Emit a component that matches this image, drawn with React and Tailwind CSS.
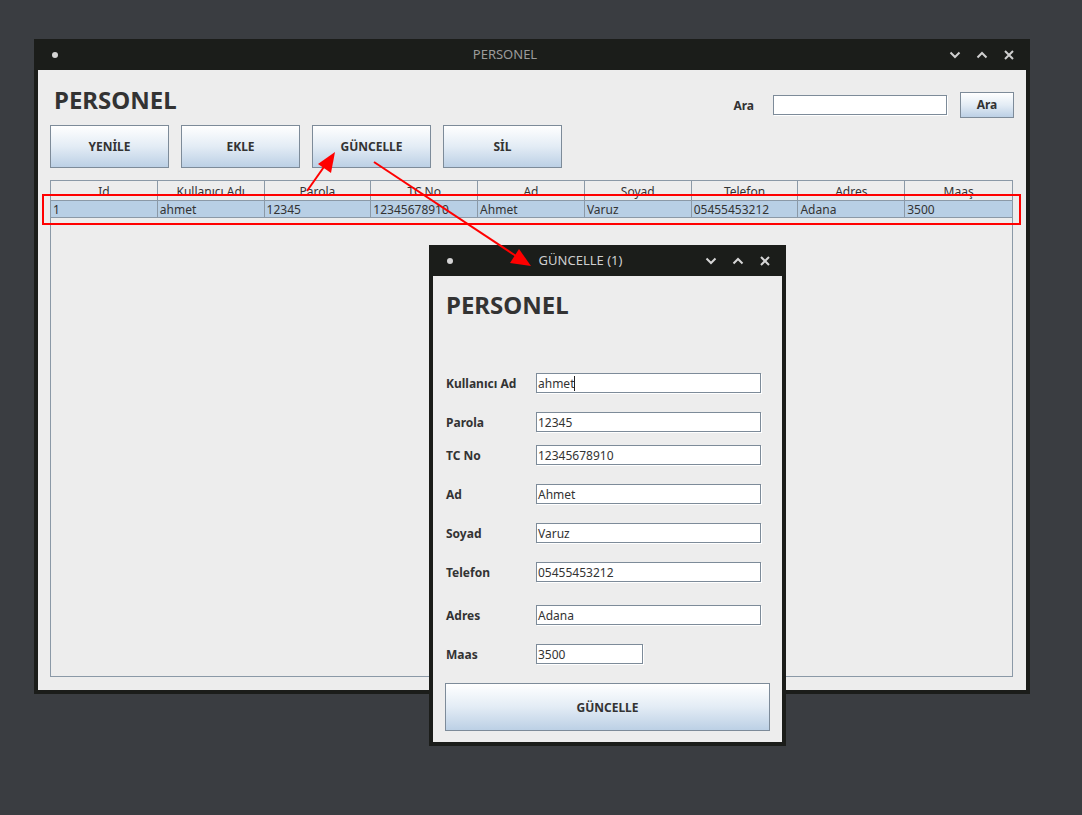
import React from "react";

function Controls({ active }) {
  const c = active ? "#d6d6d6" : "#cfcfcf";
  return (
    <div className="flex items-center w-[84px] h-full">
      <div className="w-[18px] flex justify-center">
        <svg width="12" height="8" viewBox="0 0 12 8"><polyline points="1.5,1.5 6,6 10.5,1.5" fill="none" stroke={c} strokeWidth="2" /></svg>
      </div>
      <div className="w-[18px] ml-[9px] flex justify-center">
        <svg width="12" height="8" viewBox="0 0 12 8"><polyline points="1.5,6.5 6,2 10.5,6.5" fill="none" stroke={c} strokeWidth="2" /></svg>
      </div>
      <div className="w-[18px] ml-[9px] flex justify-center">
        <svg width="10" height="10" viewBox="0 0 10 10"><path d="M1 1 L9 9 M9 1 L1 9" fill="none" stroke={c} strokeWidth="2" /></svg>
      </div>
    </div>
  );
}

function TitleBar({ title, active }) {
  return (
    <div className="flex items-center h-[31px] shrink-0">
      <div className="w-[30px] pl-[18px] flex items-center">
        <div className="w-[6px] h-[6px] rounded-full bg-[#d4d4d4]" />
      </div>
      <div className={"flex-1 text-center text-[13px] leading-[31px] " + (active ? "text-[#cfcfcf]" : "text-[#9b9b9b]")}>{title}</div>
      <Controls active={active} />
    </div>
  );
}

function Btn({ children, cls }) {
  return (
    <div className={"flex items-center justify-center border border-[#7d8b99] bg-linear-to-b from-[#ffffff] via-[#e3ecf5] to-[#bcd0e5] font-bold text-[12px] text-[#333333] " + cls}>
      {children}
    </div>
  );
}

const cols = ["Id", "Kullanıcı Adı", "Parola", "TC No", "Ad", "Soyad", "Telefon", "Adres", "Maaş"];
const row = ["1", "ahmet", "12345", "12345678910", "Ahmet", "Varuz", "05455453212", "Adana", "3500"];

const fields = [
  { label: "Kullanıcı Ad", value: "ahmet", mt: "mt-[52px]", w: "w-[225px]", cursor: true },
  { label: "Parola", value: "12345", mt: "mt-[19px]", w: "w-[225px]" },
  { label: "TC No", value: "12345678910", mt: "mt-[13px]", w: "w-[225px]" },
  { label: "Ad", value: "Ahmet", mt: "mt-[19px]", w: "w-[225px]" },
  { label: "Soyad", value: "Varuz", mt: "mt-[19px]", w: "w-[225px]" },
  { label: "Telefon", value: "05455453212", mt: "mt-[19px]", w: "w-[225px]" },
  { label: "Adres", value: "Adana", mt: "mt-[23px]", w: "w-[225px]" },
  { label: "Maas", value: "3500", mt: "mt-[19px]", w: "w-[107px]" },
];

export default function App() {
  return (
    <div className="relative w-[1082px] h-[815px] overflow-hidden bg-[#3a3d41] font-['Noto_Sans',sans-serif] text-[#333333]">
      {/* Main window */}
      <div className="absolute left-[34px] top-[39px] w-[996px] h-[655px] bg-[#1b1d1a] flex flex-col">
        <TitleBar title="PERSONEL" />
        <div className="mx-[4px] h-[620px] bg-[#ededed] flex flex-col pl-[12px] pr-[12px]">
          <div className="flex items-start justify-between mt-[14px]">
            <div className="ml-[4px] text-[24px] leading-[32px] font-bold text-[#333333]">PERSONEL</div>
            <div className="flex items-center mt-[8px] h-[26px]">
              <span className="text-[12px] font-bold pt-[1px]">Ara</span>
              <div className="ml-[19px] w-[174px] h-[20px] bg-white border border-[#7d8b99] shadow-[1px_1px_0_#ffffff]" />
              <Btn cls="ml-[13px] w-[54px] h-[26px]">Ara</Btn>
            </div>
          </div>
          <div className="flex gap-[12px] mt-[7px]">
            <Btn cls="w-[119px] h-[43px]">YENİLE</Btn>
            <Btn cls="w-[119px] h-[43px]">EKLE</Btn>
            <Btn cls="w-[119px] h-[43px]">GÜNCELLE</Btn>
            <Btn cls="w-[119px] h-[43px]">SİL</Btn>
          </div>
          <div className="mt-[12px] w-[963px] h-[497px] border border-[#8b99a7] bg-[#ededed]">
            <div className="grid grid-cols-9 h-[20px] border-b border-[#8b99a7]">
              {cols.map((c, i) => (
                <div key={c} className={"text-center text-[12px] leading-[20px] pt-[1px] text-[#333333] " + (i < 8 ? "border-r border-[#8b99a7]" : "")}>{c}</div>
              ))}
            </div>
            <div className="grid grid-cols-9 h-[17px] bg-[#b8cfe5] border-b border-[#8b99a7]">
              {row.map((c, i) => (
                <div key={i} className={"pl-[2px] pt-[1px] text-[12px] leading-[15px] text-[#333333] " + (i < 8 ? "border-r border-[#8b99a7]" : "")}>{c}</div>
              ))}
            </div>
          </div>
        </div>
      </div>

      {/* Dialog window */}
      <div className="absolute left-[429px] top-[245px] w-[357px] h-[501px] bg-[#1b1d1a] flex flex-col">
        <TitleBar title="GÜNCELLE (1)" active />
        <div className="mx-[4px] h-[466px] bg-[#ededed] flex flex-col">
          <div className="ml-[13px] mt-[13px] text-[24px] leading-[32px] font-bold">PERSONEL</div>
          {fields.map((f) => (
            <div key={f.label} className={"flex items-center h-[20px] " + f.mt}>
              <div className="ml-[13px] w-[90px] text-[12px] font-bold pt-[2px]">{f.label}</div>
              <div className={"h-[20px] bg-white border border-[#7d8b99] shadow-[1px_1px_0_#ffffff] pl-[1px] pt-[1px] text-[12px] leading-[18px] flex items-center " + f.w}>
                <span>{f.value}</span>
                {f.cursor && <span className="w-[1px] h-[15px] bg-[#222222]" />}
              </div>
            </div>
          ))}
          <Btn cls="ml-[12px] mt-[19px] w-[325px] h-[48px] pt-[2px]">GÜNCELLE</Btn>
        </div>
      </div>

      {/* Annotations */}
      <svg className="absolute left-0 top-0 pointer-events-none" width="1082" height="815" viewBox="0 0 1082 815">
        <rect x="43" y="195" width="977" height="29" fill="none" stroke="#ff0000" strokeWidth="2" />
        <line x1="307" y1="191" x2="326" y2="164" stroke="#ff0000" strokeWidth="2" />
        <polygon points="335,152 331,173 318,164" fill="#ff0000" />
        <line x1="374" y1="162" x2="516" y2="256" stroke="#ff0000" strokeWidth="2" />
        <polygon points="531,266 510,263 519,249" fill="#ff0000" />
      </svg>
    </div>
  );
}
